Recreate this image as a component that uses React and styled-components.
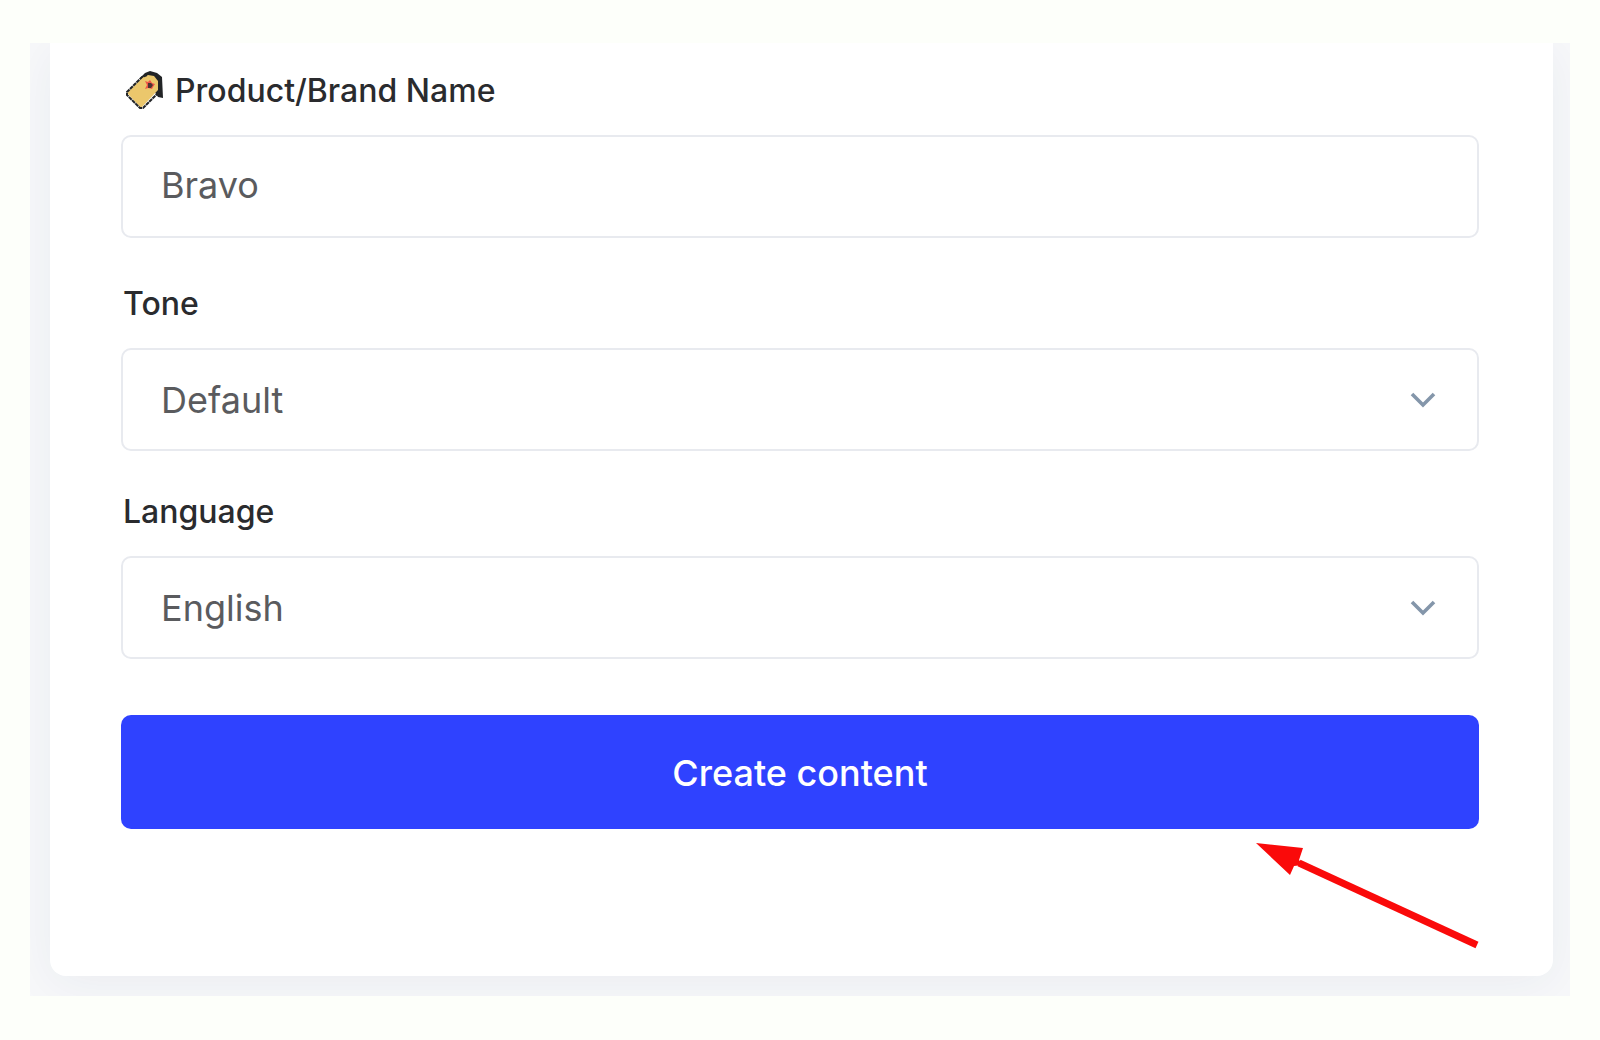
import React, { useState } from 'react';
import styled, { createGlobalStyle } from 'styled-components';

const GlobalStyle = createGlobalStyle`
  *, *::before, *::after { box-sizing: border-box; }
  body {
    margin: 0;
    background: #fdfffa;
    font-family: Inter, "Liberation Sans", sans-serif;
  }
`;

const Page = styled.main`
  padding: 43px 30px 44px;
`;

const Backdrop = styled.div`
  padding: 0 17px 20px 20px;
  background: #f7f8fa;
  overflow: hidden;
`;

const Card = styled.form`
  position: relative;
  display: flex;
  flex-direction: column;
  padding: 28px 74px 147px 71px;
  background: #ffffff;
  border-radius: 0 0 16px 16px;
  box-shadow: 0 8px 48px rgba(40, 50, 90, 0.06);
`;

const Field = styled.div`
  display: flex;
  flex-direction: column;
  gap: 24px;
  margin-bottom: ${({ $space }) => $space}px;
`;

const Label = styled.label`
  display: flex;
  align-items: center;
  gap: 4px;
  padding-left: 2px;
  color: #2a2b2e;
  font-size: 32px;
  font-weight: 500;
  line-height: 40px;
`;

const controlStyle = `
  width: 100%;
  height: 103px;
  border: 2px solid #e8eaef;
  border-radius: 10px;
  background: #ffffff;
  color: #5a5b5e;
  font-family: inherit;
  font-size: 36px;
  font-weight: 400;
  outline: none;

  &:focus-visible { border-color: #2f42ff; }
`;

const TextInput = styled.input`
  ${controlStyle}
  padding: 0 38px 4px;
`;

const SelectBox = styled.div`
  display: grid;
  align-items: center;

  > * { grid-area: 1 / 1; }
`;

const Select = styled.select`
  ${controlStyle}
  appearance: none;
  padding: 0 80px 0 38px;
`;

const Chevron = styled.svg`
  width: 28px;
  height: 18px;
  margin-right: 42px;
  justify-self: end;
  pointer-events: none;
`;

const TagGlyph = styled.svg`
  width: 48px;
  height: 40px;
`;

const SubmitButton = styled.button`
  height: 114px;
  padding: 2px 32px 0;
  border: 0;
  border-radius: 10px;
  background: #2f42ff;
  color: #ffffff;
  font-family: inherit;
  font-size: 36px;
  font-weight: 500;
  cursor: pointer;
`;

const Pointer = styled.svg`
  position: absolute;
  right: 69px;
  bottom: 24px;
  width: 230px;
  height: 112px;
  pointer-events: none;
`;

function TagIcon() {
  return (
    <TagGlyph viewBox="0 0 48 40" aria-hidden="true">
      <path d="M17 7 L22 2 L27 0 L34 2 L39 6 L40 27 L35 26 L31 20 Z" fill="#222426" />
      <path d="M4 22 L20 6 L25 4 L31 5 L35 10 V19 L19 36 H17 Z" fill="#ebc76c" />
      <path
        d="M24 4 L19 6 L4 21 V24 L17 37 H20 L36 21"
        fill="none"
        stroke="#222426"
        strokeWidth="2"
        strokeDasharray="4 0.6"
      />
      <path d="M22 10 L25 11 L27 9 L29 12 L32 13 L30 16 L29 18 L25 17 L22 18 L24 14 Z" fill="#ee5648" />
      <path d="M25 12 H28 L30 14 L28 17 H25 Z" fill="#4b3433" />
    </TagGlyph>
  );
}

function SelectField({ id, label, options, space }) {
  const [value, setValue] = useState(options[0]);
  return (
    <Field $space={space}>
      <Label htmlFor={id}>{label}</Label>
      <SelectBox>
        <Select id={id} value={value} onChange={(e) => setValue(e.target.value)}>
          {options.map((option) => (
            <option key={option}>{option}</option>
          ))}
        </Select>
        <Chevron viewBox="0 0 28 18" aria-hidden="true">
          <path d="M3 3 L14 14 L25 3" fill="none" stroke="#8496aa" strokeWidth="3.6" />
        </Chevron>
      </SelectBox>
    </Field>
  );
}

export default function App() {
  const [name, setName] = useState('Bravo');
  return (
    <>
      <GlobalStyle />
      <Page>
        <Backdrop>
          <Card onSubmit={(e) => e.preventDefault()}>
            <Field $space={46}>
              <Label htmlFor="name">
                <TagIcon />
                Product/Brand Name
              </Label>
              <TextInput id="name" value={name} onChange={(e) => setName(e.target.value)} />
            </Field>
            <SelectField id="tone" label="Tone" options={['Default']} space={41} />
            <SelectField id="language" label="Language" options={['English']} space={56} />
            <SubmitButton type="submit">Create content</SubmitButton>
            <Pointer viewBox="0 0 230 112" aria-hidden="true">
              <path d="M45 23 L223 105" stroke="#fa0a0a" strokeWidth="7" />
              <path d="M2 3 L49 8 L45 20 L49 25 L40 26 L36 35 Z" fill="#fa0a0a" />
            </Pointer>
          </Card>
        </Backdrop>
      </Page>
    </>
  );
}
